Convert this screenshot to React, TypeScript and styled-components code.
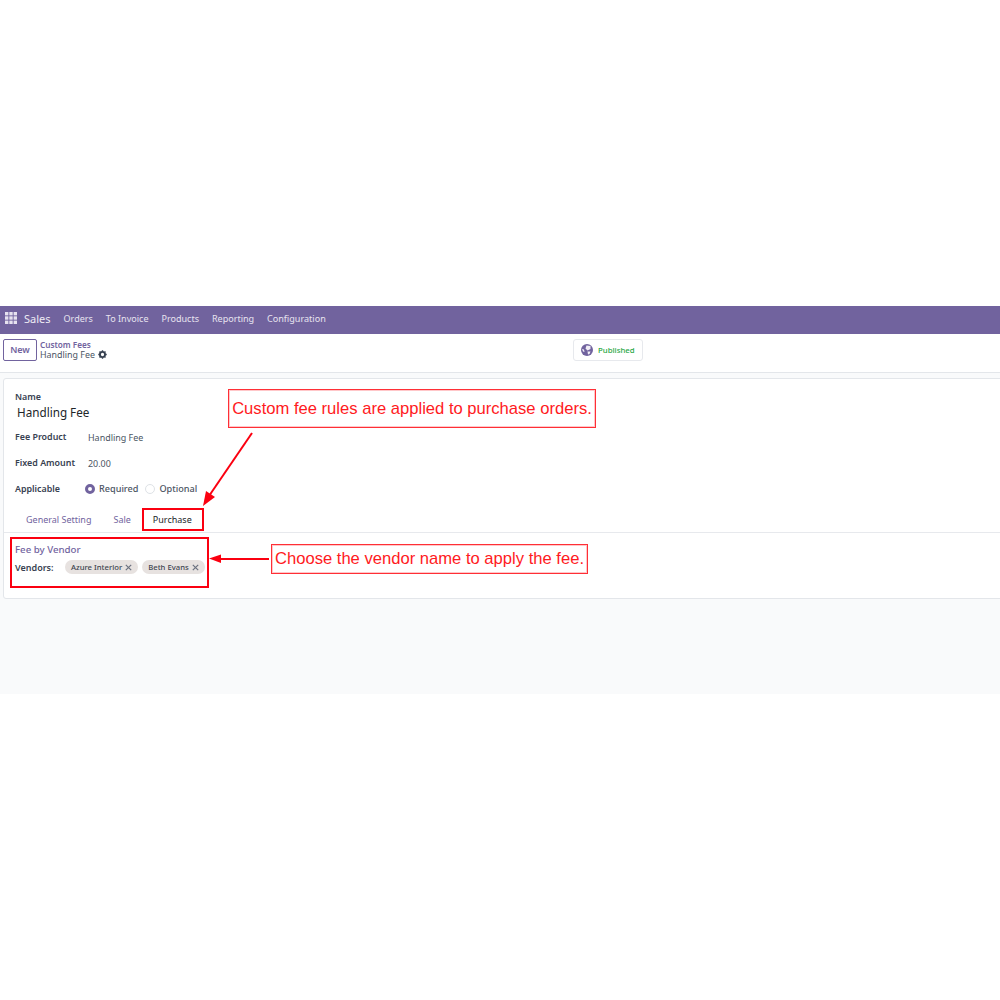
import React from "react";
import styled, { createGlobalStyle } from "styled-components";

const Global = createGlobalStyle`
  html, body { margin: 0; padding: 0; background: #fff; }
  body { font-family: "Noto Sans", "Open Sans", sans-serif; width: 1000px; height: 1000px; overflow: hidden; }
`;

const Page = styled.div`
  width: 1000px; height: 1000px; padding-top: 306px; box-sizing: border-box; position: relative; overflow: hidden;
`;
const Shot = styled.div`
  height: 388px; background: #f9fafb; display: flex; flex-direction: column;
`;
const NavBar = styled.nav`
  height: 28px; background: #71639e; display: flex; align-items: center; color: #f0edf6; padding: 0 0 4px 5px; box-sizing: border-box;
`;
const AppName = styled.span`
  font-size: 11px; margin-left: 7px; margin-right: 13px; color: #eeebf4;
`;
const NavItem = styled.span`
  font-size: 9.05px; margin-right: 12.9px; color: #e8e4f0; white-space: nowrap;
`;
const Control = styled.header`
  height: 39px; background: #fff; border-bottom: 1px solid #e3e6ea; box-sizing: border-box; padding-left: 3px; display: flex; align-items: center; position: relative;
`;
const NewButton = styled.button`
  width: 34px; height: 22px; margin-top: -7px; padding: 0; border: 1px solid #71639e; border-radius: 2px; background: #fff; color: #71639e; font: 600 9px "Noto Sans", sans-serif;
`;
const Crumbs = styled.div`
  margin-left: 3px; margin-top: -7px; display: flex; flex-direction: column; line-height: 10px;
`;
const CrumbLink = styled.span`
  font-size: 8.2px; font-weight: 600; color: #71639e;
`;
const CrumbCurrent = styled.span`
  font-size: 8.9px; color: #4b5563; display: flex; align-items: center; gap: 3px;
`;
const StatusCenter = styled.div`
  position: absolute; left: 573px; top: 5px; width: 70px; height: 22px; box-sizing: border-box; border: 1px solid #e7e9ed; border-radius: 3px; display: flex; align-items: center; padding-left: 7px; gap: 5px; background: #fff;
`;
const Published = styled.span`
  font-size: 7.8px; font-weight: 500; color: #28a745;
`;
const Sheet = styled.section`
  margin: 5px -4px 0 3px; height: 221px; box-sizing: border-box; background: #fff; border: 1px solid #e3e6ea; border-radius: 3px; padding-top: 12px; display: flex; flex-direction: column;
`;
const FieldBlock = styled.div`
  padding-left: 11px;
`;
const NameLabel = styled.div`
  font-size: 8.9px; font-weight: 600; color: #374151; line-height: 12px;
`;
const NameValue = styled.div`
  font-size: 11.7px; color: #212529; margin: 0 0 3px 2px; line-height: 18px;
`;
const Row = styled.div`
  display: flex; align-items: center; height: 26px;
`;
const RowLabel = styled.div`
  width: 73px; font-size: 8.9px; font-weight: 600; color: #374151; white-space: nowrap; margin-top: -2px;
`;
const RowValue = styled.div`
  font-size: 8.95px; color: #4b5563; white-space: nowrap;
`;
const RadioMark = styled.span<{ $on?: boolean }>`
  width: 10px; height: 10px; border-radius: 50%; box-sizing: border-box; margin: 0 4px 0 -3px; flex: none;
  ${(p) => (p.$on ? "border: 3px solid #71639e; background: #fff;" : "border: 1px solid #dee2e6; background: #fff;")}
`;
const RadioText = styled.span`
  font-size: 9.15px; font-weight: 500; color: #4b5563; margin-right: 10px; margin-top: -1px;
`;
const Tabs = styled.div`
  height: 32px; box-sizing: border-box; margin-top: -1px; padding: 6px 0 0 11px; border-bottom: 1px solid #e7e9ed; display: flex; align-items: center;
`;
const Tab = styled.span<{ $active?: boolean }>`
  font-size: 9px; padding: 0 11px; white-space: nowrap; color: ${(p) => (p.$active ? "#212529" : "#71639e")};
`;
const TabPane = styled.div`
  padding: 10px 0 0 11px;
`;
const SectionTitle = styled.div`
  font-size: 9.7px; font-weight: 500; color: #71639e; line-height: 14px;
`;
const VendorRow = styled.div`
  display: flex; align-items: center; margin-top: 2px; height: 16px;
`;
const VendorLabel = styled.span`
  font-size: 9px; font-weight: 600; color: #374151; width: 50px;
`;
const Chip = styled.span`
  height: 14px; border-radius: 7px; background: #e7e2e0; color: #3f4650; font-size: 7.7px; font-weight: 500; display: inline-flex; align-items: center; gap: 3px; padding: 0 6px; margin-right: 4px; white-space: nowrap;
`;
const Note = styled.div<{ $x: number; $y: number; $w: number; $h: number }>`
  position: absolute; left: ${(p) => p.$x}px; top: ${(p) => p.$y}px; width: ${(p) => p.$w}px; height: ${(p) => p.$h}px; box-sizing: border-box; border: 1px solid #ff2f36; box-shadow: inset 0 0 0 1px rgba(255, 70, 75, 0.3); background: #fff; color: #ff1a22; font: 16.6px "Liberation Sans", sans-serif; display: flex; align-items: center; justify-content: center; white-space: nowrap;
`;
const RedBox = styled.div<{ $x: number; $y: number; $w: number; $h: number }>`
  position: absolute; left: ${(p) => p.$x}px; top: ${(p) => p.$y}px; width: ${(p) => p.$w}px; height: ${(p) => p.$h}px; box-sizing: border-box; border: 2px solid #fb0010;
`;
const Arrows = styled.svg`
  position: absolute; left: 0; top: 0;
`;

const Grid = () => (
  <svg width="12" height="12" viewBox="0 0 12 12" fill="#e6e2ef">
    {[0, 4.3, 8.6].flatMap((x) =>
      [0, 4.3, 8.6].map((y) => <rect key={`${x}-${y}`} x={x} y={y} width="3.4" height="3.4" />)
    )}
  </svg>
);
const Gear = () => (
  <svg width="9" height="9" viewBox="0 0 16 16">
    <circle cx="8" cy="8" r="4.6" fill="none" stroke="#374151" strokeWidth="3.4" />
    <path d="M8 0.5v3M8 12.5v3M0.5 8h3M12.5 8h3M2.7 2.7l2.1 2.1M11.2 11.2l2.1 2.1M2.7 13.3l2.1-2.1M11.2 4.8l2.1-2.1" stroke="#374151" strokeWidth="2.4" />
  </svg>
);
const Globe = () => (
  <svg width="12" height="12" viewBox="0 0 12 12">
    <circle cx="6" cy="6" r="6" fill="#71639e" />
    <path d="M5.5 1.5 L9.500 2 L9.500 5 L6.5 6.500 L4.5 4.5Z M6.5 7.500 L9.500 7.500 L8.500 10 L7 10.500Z M1 5 L3 5.500 L3.500 8 L2 7.500Z" fill="#f1eef6" />
  </svg>
);
const X = () => (
  <svg width="7" height="7" viewBox="0 0 7 7">
    <path d="M0.8 0.8L6.2 6.2M6.2 0.8L0.8 6.2" stroke="#6b7280" strokeWidth="1.2" />
  </svg>
);

export default function App() {
  return (
    <Page>
      <Global />
      <Shot>
        <NavBar>
          <Grid />
          <AppName>Sales</AppName>
          {["Orders", "To Invoice", "Products", "Reporting", "Configuration"].map((n) => (
            <NavItem key={n}>{n}</NavItem>
          ))}
        </NavBar>
        <Control>
          <NewButton>New</NewButton>
          <Crumbs>
            <CrumbLink>Custom Fees</CrumbLink>
            <CrumbCurrent>
              Handling Fee <Gear />
            </CrumbCurrent>
          </Crumbs>
          <StatusCenter>
            <Globe />
            <Published>Published</Published>
          </StatusCenter>
        </Control>
        <Sheet>
          <FieldBlock>
            <NameLabel>Name</NameLabel>
            <NameValue>Handling Fee</NameValue>
            <Row>
              <RowLabel>Fee Product</RowLabel>
              <RowValue>Handling Fee</RowValue>
            </Row>
            <Row>
              <RowLabel>Fixed Amount</RowLabel>
              <RowValue>20.00</RowValue>
            </Row>
            <Row>
              <RowLabel>Applicable</RowLabel>
              <RadioMark $on />
              <RadioText>Required</RadioText>
              <RadioMark />
              <RadioText>Optional</RadioText>
            </Row>
          </FieldBlock>
          <Tabs>
            <Tab>General Setting</Tab>
            <Tab>Sale</Tab>
            <Tab $active>Purchase</Tab>
          </Tabs>
          <TabPane>
            <SectionTitle>Fee by Vendor</SectionTitle>
            <VendorRow>
              <VendorLabel>Vendors:</VendorLabel>
              <Chip>Azure Interior <X /></Chip>
              <Chip>Beth Evans <X /></Chip>
            </VendorRow>
          </TabPane>
        </Sheet>
      </Shot>
      <Note $x={228} $y={389} $w={368} $h={39}>Custom fee rules are applied to purchase orders.</Note>
      <Note $x={271} $y={544} $w={317} $h={30}>Choose the vendor name to apply the fee.</Note>
      <RedBox $x={142} $y={508} $w={62} $h={23} />
      <RedBox $x={10} $y={537} $w={199} $h={51} />
      <Arrows width="1000" height="1000" viewBox="0 0 1000 1000">
        <path d="M252 433L209 496" stroke="#fb0010" strokeWidth="2" fill="none" />
        <path d="M203 506L206 491L215 497Z" fill="#fb0010" />
        <path d="M269 559L220 559" stroke="#fb0010" strokeWidth="2" fill="none" />
        <path d="M209 558.500L221 554.500L221 563Z" fill="#fb0010" />
      </Arrows>
    </Page>
  );
}
